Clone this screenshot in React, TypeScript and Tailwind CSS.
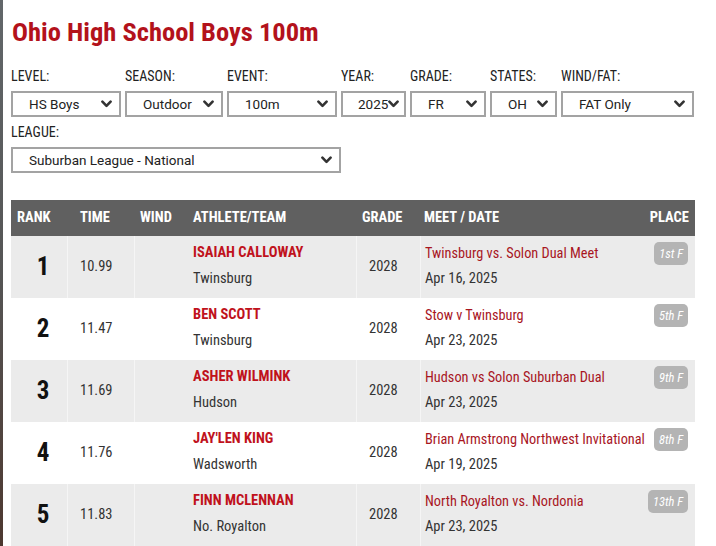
import React from "react";

const COND = "font-['Roboto_Condensed','Liberation_Sans_Narrow','DejaVu_Sans_Condensed',sans-serif]";
const ROBO = "font-['Roboto',sans-serif]";

function Chevron() {
  return (
    <svg width="11" height="8" viewBox="0 0 11 8" className="shrink-0 ml-auto">
      <path d="M1.4 1.6 L5.5 5.8 L9.6 1.6" fill="none" stroke="#333" strokeWidth="2.6" strokeLinecap="round" strokeLinejoin="round" />
    </svg>
  );
}

function Select({ value, w, pad = "pl-[16px] pr-[7px]" }: { value: string; w: string; pad?: string }) {
  return (
    <div className={`${w} h-[26px] border-2 border-[#a3a3a3] bg-white flex items-center ${pad} ${ROBO} text-[13.5px] text-[#222]`}>
      <span className="whitespace-nowrap">{value}</span>
      <Chevron />
    </div>
  );
}

function Field({ label, value, w, pad }: { label: string; value: string; w: string; pad?: string }) {
  return (
    <div className="flex flex-col">
      <div className={`${COND} text-[14px] leading-[20px] text-[#222] mb-[5px]`}>{label}</div>
      <Select value={value} w={w} pad={pad} />
    </div>
  );
}

const rows = [
  { rank: 1, time: "10.99", name: "ISAIAH CALLOWAY", team: "Twinsburg", grade: "2028", meet: "Twinsburg vs. Solon Dual Meet", date: "Apr 16, 2025", place: "1st F" },
  { rank: 2, time: "11.47", name: "BEN SCOTT", team: "Twinsburg", grade: "2028", meet: "Stow v Twinsburg", date: "Apr 23, 2025", place: "5th F" },
  { rank: 3, time: "11.69", name: "ASHER WILMINK", team: "Hudson", grade: "2028", meet: "Hudson vs Solon Suburban Dual", date: "Apr 23, 2025", place: "9th F" },
  { rank: 4, time: "11.76", name: "JAY'LEN KING", team: "Wadsworth", grade: "2028", meet: "Brian Armstrong Northwest Invitational", date: "Apr 19, 2025", place: "8th F" },
  { rank: 5, time: "11.83", name: "FINN MCLENNAN", team: "No. Royalton", grade: "2028", meet: "North Royalton vs. Nordonia", date: "Apr 23, 2025", place: "13th F" },
];

export default function App() {
  return (
    <div className="w-[716px] h-[546px] bg-white flex overflow-hidden">
      <div className="w-[3px] shrink-0 bg-gradient-to-b from-[#62676a] via-[#555] to-[#4d3830]" />
      <div className="flex-1 pl-[8px] pt-[16px]">
        <h1 className={`${COND} font-bold text-[26.5px] leading-[32px] text-[#b3121b] pl-[1px]`}>Ohio High School Boys 100m</h1>
        <div className="mt-[18px] flex gap-[4px]">
          <Field label="LEVEL:" value="HS Boys" w="w-[110px]" />
          <Field label="SEASON:" value="Outdoor" w="w-[98px]" />
          <Field label="EVENT:" value="100m" w="w-[110px]" />
          <Field label="YEAR:" value="2025" w="w-[65px]" pad="pl-[15px] pr-[6px]" />
          <Field label="GRADE:" value="FR" w="w-[76px]" />
          <Field label="STATES:" value="OH" w="w-[67px]" />
          <Field label="WIND/FAT:" value="FAT Only" w="w-[133px]" />
        </div>
        <div className="mt-[5px]">
          <Field label="LEAGUE:" value="Suburban League - National" w="w-[330px]" />
        </div>
        <div className={`mt-[27px] w-[684px] ${COND}`}>
          <div className="grid grid-cols-[56px_67px_53px_169px_64px_1fr_auto] h-[36px] bg-[#606060] text-white font-bold text-[14.5px] items-center">
            <div className="pl-[6px]">RANK</div>
            <div className="pl-[13px]">TIME</div>
            <div className="pl-[6px]">WIND</div>
            <div className="pl-[6px]">ATHLETE/TEAM</div>
            <div className="pl-[6px]">GRADE</div>
            <div className="pl-[4px]">MEET / DATE</div>
            <div className="pr-[6px] text-right">PLACE</div>
          </div>
          {rows.map((r, i) => (
            <div key={r.rank} className={`grid grid-cols-[56px_67px_53px_169px_64px_1fr_auto] h-[62px] ${i % 2 === 0 ? "bg-[#ebebeb]" : "bg-white"}`}>
              <div className="flex items-center justify-center pl-[8px] font-bold text-[25px] text-[#111]">{r.rank}</div>
              <div className={`flex items-center pl-[12px] border-l ${i % 2 === 0 ? "border-[#f5f5f5]" : "border-white"} text-[14.5px] text-[#333]`}>{r.time}</div>
              <div className={`border-l ${i % 2 === 0 ? "border-[#f5f5f5]" : "border-white"}`} />
              <div className="pl-[6px] pt-[7px]">
                <div className="font-bold text-[14.5px] leading-[20px] text-[#c0121c]">{r.name}</div>
                <div className="mt-[6px] text-[14.5px] leading-[20px] text-[#333]">{r.team}</div>
              </div>
              <div className={`flex items-center pl-[12px] border-l ${i % 2 === 0 ? "border-[#f5f5f5]" : "border-white"} text-[14.5px] text-[#333]`}>{r.grade}</div>
              <div className={`pl-[4px] pt-[7px] border-l ${i % 2 === 0 ? "border-[#f5f5f5]" : "border-white"}`}>
                <div className="text-[14.3px] leading-[20px] text-[#a8161f] whitespace-nowrap">{r.meet}</div>
                <div className="mt-[6px] text-[14.5px] leading-[20px] text-[#333]">{r.date}</div>
              </div>
              <div className="flex justify-end pr-[7px] pt-[6px] pl-[4px]">
                <div className="h-[23px] px-[5px] rounded-[5px] bg-[#b4b4b4] text-white italic text-[12.5px] leading-[23px] whitespace-nowrap">{r.place}</div>
              </div>
            </div>
          ))}
        </div>
      </div>
    </div>
  );
}
